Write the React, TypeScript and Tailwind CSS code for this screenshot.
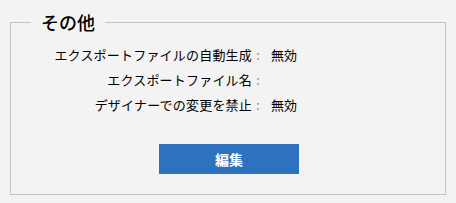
import React from 'react';

const rows = [
  { label: 'エクスポートファイルの自動生成', value: '無効' },
  { label: 'エクスポートファイル名', value: '' },
  { label: 'デザイナーでの変更を禁止', value: '無効' },
];

const App: React.FC = () => {
  return (
    <div
      className="w-[456px] h-[203px] bg-[#f3f3f3] px-[10px] pt-[10px] text-black"
      style={{ fontFamily: '"Noto Sans CJK JP", "Noto Sans", sans-serif' }}
    >
      <fieldset className="border border-[#c3c3c3] m-0 p-0 h-[185px]">
        <legend className="ml-[20px] px-[10px] text-[18px] leading-[24px] font-medium">その他</legend>
        <div className="pt-[8px] text-[13px]">
          {rows.map((r, i) => (
            <div key={i} className="flex items-center h-[25px] leading-[25px]">
              <span className="w-[241px] text-right tracking-[0.2px]">{r.label}</span>
              <span className="w-[12px] text-center text-[#d08a00]">:</span>
              <span className="ml-[7px]">{r.value}</span>
            </div>
          ))}
          <div className="flex justify-center pt-[27px] pl-[2px]">
            <button className="w-[140px] h-[30px] bg-[#2d71bf] text-white text-[14px] font-bold">
              編集
            </button>
          </div>
        </div>
      </fieldset>
    </div>
  );
};

export default App;
